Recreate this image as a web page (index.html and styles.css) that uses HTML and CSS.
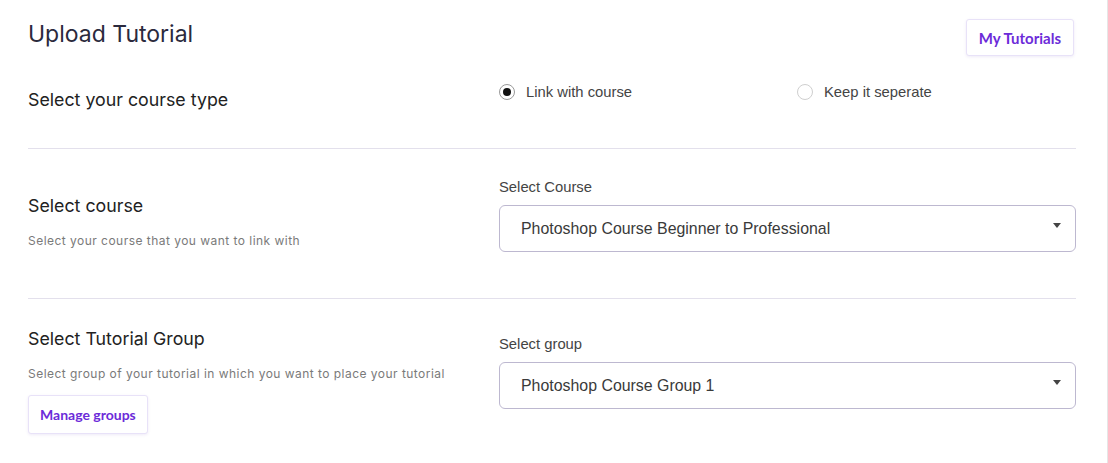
FILE: index.html
```html
<!DOCTYPE html>
<html>
<head>
<meta charset="utf-8">
<link rel="stylesheet" href="styles.css">
</head>
<body>
<div class="page">
  <header class="top">
    <h1 class="title">Upload Tutorial</h1>
    <button class="btn">My Tutorials</button>
  </header>

  <section class="row row-type">
    <div class="left">
      <h2 class="sec-title">Select your course type</h2>
    </div>
    <div class="right radios">
      <label class="radio"><span class="dot checked"></span>Link with course</label>
      <label class="radio"><span class="dot"></span>Keep it seperate</label>
    </div>
  </section>

  <hr class="divider">

  <section class="row row-course">
    <div class="left">
      <h2 class="sec-title">Select course</h2>
      <p class="sub">Select your course that you want to link with</p>
    </div>
    <div class="right">
      <div class="label">Select Course</div>
      <div class="select">
        <span>Photoshop Course Beginner to Professional</span>
        <span class="caret"></span>
      </div>
    </div>
  </section>

  <hr class="divider">

  <section class="row row-group">
    <div class="left">
      <h2 class="sec-title">Select Tutorial Group</h2>
      <p class="sub">Select group of your tutorial in which you want to place your tutorial</p>
      <button class="btn btn-sm">Manage groups</button>
    </div>
    <div class="right">
      <div class="label">Select group</div>
      <div class="select">
        <span>Photoshop Course Group 1</span>
        <span class="caret"></span>
      </div>
    </div>
  </section>
</div>
</body>
</html>
```

FILE: styles.css
```css
* { box-sizing: border-box; }
html, body { margin: 0; padding: 0; }
body {
  background: #fff;
  font-family: Inter, "Liberation Sans", sans-serif;
  color: #222;
  width: 1108px;
  height: 463px;
  overflow: hidden;
  border-right: 1px solid #e6e6e6;
}
.page {
  padding: 19px 31px 0 28px;
}
.top {
  display: flex;
  justify-content: space-between;
  align-items: flex-start;
  height: 57px;
}
.title {
  margin: 0;
  padding-top: 2px;
  font-size: 23px;
  font-weight: 400;
  color: #2b2a3d;
  line-height: 26px;
}
.btn {
  font-family: Lato, sans-serif;
  font-weight: 700;
  font-size: 15px;
  color: #6c2bd9;
  background: #fff;
  border: 1px solid #e8e2f8;
  border-radius: 3px;
  box-shadow: 0 1px 3px rgba(120, 90, 200, 0.12);
  height: 37px;
  padding: 0 12px;
  margin-right: 2px;
  cursor: pointer;
}
.row {
  display: grid;
  grid-template-columns: 471px 1fr;
}
.row-type {
  height: 72px;
  align-items: start;
}
.row-type .sec-title { margin-top: 14px; }
.sec-title {
  margin: 0;
  font-size: 17.8px;
  font-weight: 400;
  color: #222;
  line-height: 20px;
}
.radios {
  display: grid;
  grid-template-columns: 298px 1fr;
  padding-top: 8px;
}
.radio {
  display: flex;
  align-items: center;
  font-family: "Liberation Sans", sans-serif;
  font-size: 14.8px;
  color: #444;
  line-height: 16px;
}
.dot {
  width: 16px;
  height: 16px;
  border-radius: 50%;
  border: 1px solid #cfcfcf;
  margin-right: 11px;
  display: inline-flex;
  align-items: center;
  justify-content: center;
  background: #fff;
}
.dot.checked { border-color: #9a9a9a; }
.dot.checked::after {
  content: "";
  width: 8px;
  height: 8px;
  border-radius: 50%;
  background: #111;
}
.divider {
  border: 0;
  border-top: 1px solid #e3e0ec;
  margin: 0;
}
.row-course { height: 149px; padding-top: 30px; }
.row-course .sec-title { margin-top: 17px; }
.row-group { padding-top: 30px; }
.row-group .sec-title { margin-top: 0; }
.row-group .right { padding-top: 7px; }
.sub {
  margin: 17px 0 0;
  font-size: 12px;
  color: #7a7a7a;
  letter-spacing: 0.47px;
  line-height: 16px;
}
.btn-sm {
  margin-top: 13px;
  height: 39px;
  padding: 0 11px;
  font-size: 14px;
}
.label {
  font-family: "Liberation Sans", sans-serif;
  font-size: 14.8px;
  color: #444;
  line-height: 16px;
  margin-bottom: 10px;
}
.select {
  display: flex;
  align-items: center;
  justify-content: space-between;
  height: 47px;
  border: 1px solid #bdb8d0;
  border-radius: 6px;
  padding: 0 14px 0 21px;
  font-family: "Liberation Sans", sans-serif;
  font-size: 15.9px;
  color: #3a3a3a;
}
.caret {
  width: 0;
  height: 0;
  border-left: 4px solid transparent;
  border-right: 4px solid transparent;
  border-top: 5px solid #444;
  margin-top: -6px;
}
```
